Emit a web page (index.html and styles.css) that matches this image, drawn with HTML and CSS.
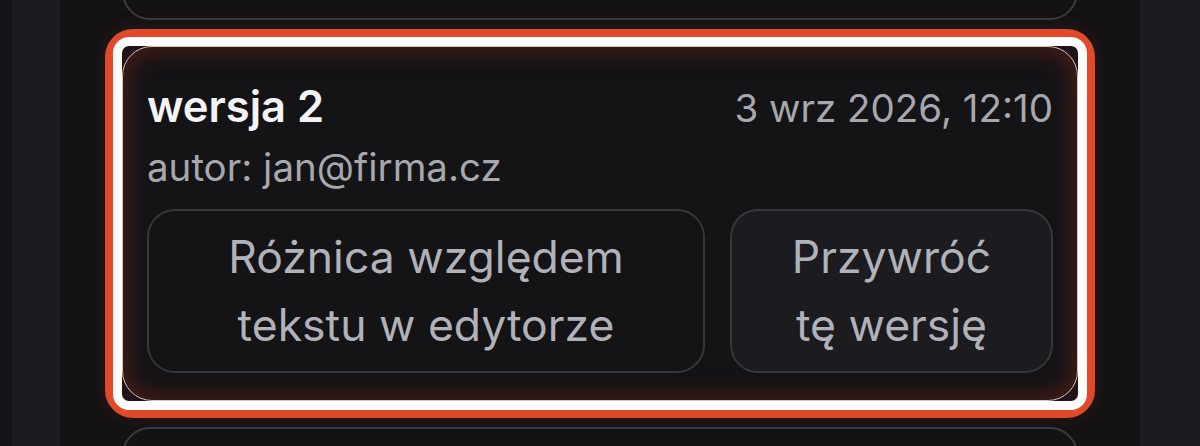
FILE: index.html
```html
<!DOCTYPE html>
<html lang="pl">
<head>
<meta charset="utf-8">
<title>Wersje</title>
<link rel="stylesheet" href="styles.css">
</head>
<body>
<div class="app">
  <div class="edge"></div>
  <div class="rail"></div>
  <main class="list">
    <div class="card card-prev"></div>
    <div class="ring">
      <div class="ring-inner">
        <section class="card card-active">
          <header class="head">
            <h2 class="title">wersja 2</h2>
            <span class="date">3 wrz 2026, 12:10</span>
          </header>
          <p class="author">autor: jan@firma.cz</p>
          <div class="actions">
            <button class="btn">Różnica względem<br>tekstu w edytorze</button>
            <button class="btn btn-hover">Przywróć<br>tę wersję</button>
          </div>
        </section>
      </div>
    </div>
    <div class="card card-next"></div>
  </main>
  <div class="rail rail-right"></div>
</div>
</body>
</html>
```

FILE: styles.css
```css
* { box-sizing: border-box; }
html, body { margin: 0; padding: 0; }
body {
  background: #141317;
  font-family: Inter, "Noto Sans", sans-serif;
  overflow: hidden;
  height: 446px;
}
.app {
  display: flex;
  height: 446px;
  overflow: hidden;
}
.edge { width: 12px; background: #151418; }
.rail { width: 48px; background: #1c1b20; }
.rail-right { width: 60px; }
.list {
  width: 1080px;
  background: #131215;
  padding: 0 62px;
  display: flex;
  flex-direction: column;
}
.card {
  border: 2px solid #3a393f;
  border-radius: 28px;
  background: #131215;
}
.card-prev {
  height: 80px;
  margin-top: -60px;
  flex: none;
}
.card-next {
  height: 60px;
  margin-top: 9px;
  flex: none;
}
.ring {
  margin: 9px -17px 0;
  border: 8px solid #e2492b;
  border-radius: 28px;
  box-shadow: 0 0 22px rgba(226, 73, 43, 0.12);
  flex: none;
}
.ring-inner {
  border: 9px solid #fffdfb;
  border-radius: 16px;
  background: #221416;
}
.card-active {
  border: 1.5px solid #d9c3bd;
  border-radius: 30px;
  background: #141316;
  box-shadow: inset 0 0 28px rgba(150, 48, 28, 0.5);
  padding: 33px 24px 24px;
  height: 355px;
}
.head {
  display: flex;
  justify-content: space-between;
  align-items: baseline;
}
.title {
  margin: 0;
  font-size: 43.5px;
  font-weight: 600;
  color: #f4f4f6;
  line-height: 52px;
}
.date {
  font-size: 38.5px;
  color: #a7a7ae;
}
.author {
  margin: 13px 0 0;
  font-size: 38.5px;
  line-height: 44px;
  color: #a7a7ae;
}
.actions {
  display: grid;
  grid-template-columns: 558fr 323fr;
  gap: 25px;
  margin-top: 20px;
}
.btn {
  height: 164px;
  border: 2px solid #37363c;
  border-radius: 28px;
  background: #141316;
  color: #b1b2b9;
  font-family: inherit;
  font-size: 44.5px;
  line-height: 68px;
  text-align: center;
  padding: 0 10px;
}
.btn-hover { background: #1c1b1f; }
```
